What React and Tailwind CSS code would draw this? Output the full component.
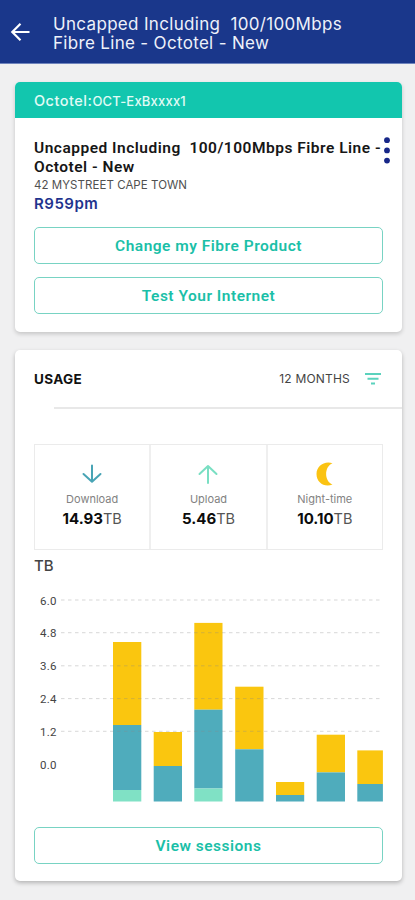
import React from "react";

const stats = [
  { label: "Download", value: "14.93", icon: "down" },
  { label: "Upload", value: "5.46", icon: "up" },
  { label: "Night-time", value: "10.10", icon: "moon" },
];

const gridLines = [
  { y: 10, label: "6.0" },
  { y: 42.7, label: "4.8" },
  { y: 75.8, label: "3.6" },
  { y: 108.6, label: "2.4" },
  { y: 141.3, label: "1.2" },
];

// top = night-time, mid = download, low = upload
const bars = [
  { x: 79, w: 28.3, top: 52, mid: 135, low: 200 },
  { x: 119.7, w: 28.3, top: 142, mid: 176 },
  { x: 160.3, w: 28.2, top: 32.9, mid: 119.7, low: 198.5 },
  { x: 201.2, w: 28.3, top: 96.7, mid: 159.3 },
  { x: 242, w: 28.2, top: 192, mid: 205 },
  { x: 282.7, w: 28.3, top: 144.7, mid: 182.4 },
  { x: 323.3, w: 25.6, top: 160.4, mid: 194 },
];

const BASE = 211.5;

const StatIcon = ({ name }) => {
  if (name === "moon") {
    return (
      <svg width="26" height="26" viewBox="0 0 26 26">
        <path d="M20.500 2.200C12 -.4 4.500 5.300 4.500 12.900C4.500 21.400 12.500 26.800 20.500 23.500C12 20 12 5.800 20.500 2.200Z" fill="#fbc312" />
      </svg>
    );
  }
  return (
    <svg width="26" height="26" viewBox="0 0 26 26" fill="none" strokeWidth="2" strokeLinecap="round" strokeLinejoin="round">
      {name === "down" ? (
        <path d="M13 4.500V20.500M4.500 13L13 20.800L21.500 13" stroke="#48a4b5" />
      ) : (
        <path d="M13 22V5.500M4.500 13L13 5L21.500 13" stroke="#7adfc3" />
      )}
    </svg>
  );
};

const OutlineButton = ({ children, className = "" }) => (
  <button className={`flex h-[37px] w-full items-center justify-center rounded-[5px] border-[1.5px] border-[#78d3c3] pt-[2px] font-[Roboto,sans-serif] text-[15.500px] font-semibold tracking-[0.5px] text-[#1bbfa8] ${className}`}>
    {children}
  </button>
);

const UsageChart = () => (
  <svg width="349" height="215" viewBox="0 0 349 215" className="block" fontFamily="Roboto, sans-serif">
    {bars.map((b) => (
      <g key={b.x}>
        <rect x={b.x} y={b.top} width={b.w} height={b.mid - b.top} fill="#fac60f" />
        <rect x={b.x} y={b.mid} width={b.w} height={(b.low || BASE) - b.mid} fill="#4facbc" />
        {b.low && <rect x={b.x} y={b.low} width={b.w} height={BASE - b.low} fill="#80e1c5" />}
      </g>
    ))}
    {gridLines.map((g) => (
      <g key={g.label}>
        <line x1="27" x2="349" y1={g.y} y2={g.y} stroke="#8a8a8a" strokeOpacity="0.33" strokeWidth="1" strokeDasharray="3.500 3.500" />
        <text x="6" y={g.y + 4.500} fontSize="11.500" letterSpacing="0.3" fill="#444">{g.label}</text>
      </g>
    ))}
    <text x="6" y="178.500" fontSize="11.500" letterSpacing="0.3" fill="#444">0.0</text>
  </svg>
);

const App = () => {
  return (
    <div className="h-[900px] w-full overflow-hidden bg-[#f0f0f1] font-[Inter,sans-serif]">
      <header className="flex h-16 items-start border-b border-[#6f84bd] bg-[#1a378b] text-[#eef1fa]">
        <svg width="20" height="20" viewBox="0 0 20 20" className="ml-[10px] mt-[22px]" fill="none" stroke="#fff" strokeWidth="2.200">
          <path d="M19.500 10H3M10.500 1.800L2.300 10L10.500 18.200" />
        </svg>
        <h1 className="ml-[23px] mt-[15px] whitespace-pre text-[17px] leading-[18.500px] tracking-[0.32px]">
          {"Uncapped Including  100/100Mbps\nFibre Line - Octotel - New"}
        </h1>
      </header>

      <main className="flex flex-col gap-[18px] pt-[18px] pr-[13px] pl-[15px]">
        <section className="h-[250px] rounded-[5px] bg-white shadow-[0_2px_4px_rgba(0,0,0,0.18)]">
          <div className="flex h-9 items-center rounded-t-[5px] bg-[#12c6ae] pt-[2px] pl-[19px] text-[#e2fbf6]">
            <span className="text-[14.500px] font-medium tracking-[0.5px]">Octotel:</span>
            <span className="pt-[2px] text-[13px] font-medium tracking-[0.2px]">OCT-ExBxxxx1</span>
          </div>
          <div className="px-[19px] pt-[21px]">
            <div className="flex h-[39px] items-start">
              <h2 className="w-[349px] shrink-0 whitespace-pre font-[Roboto,sans-serif] text-[15.500px] leading-[19px] font-semibold tracking-[0.5px] text-[#161616]">
                {"Uncapped Including  100/100Mbps Fibre Line -\nOctotel - New"}
              </h2>
              <svg width="8" height="30" viewBox="0 0 8 30" className="-mt-[3px] shrink-0" fill="#172788">
                <circle cx="4" cy="4.200" r="2.900" />
                <circle cx="4" cy="14.400" r="2.900" />
                <circle cx="4" cy="24.600" r="2.900" />
              </svg>
            </div>
            <p className="text-[11.500px] leading-[15px] tracking-[0.05px] text-[#505050]">42 MYSTREET CAPE TOWN</p>
            <p className="text-[15px] leading-[22px] font-semibold tracking-[0.5px] text-[#1f348e]">R959pm</p>
            <OutlineButton className="mt-[12px]">Change my Fibre Product</OutlineButton>
            <OutlineButton className="mt-[13px]">Test Your Internet</OutlineButton>
          </div>
        </section>

        <section className="h-[531px] rounded-[5px] bg-white shadow-[0_2px_4px_rgba(0,0,0,0.25)]">
          <div className="flex h-[57px] items-center px-[19px]">
            <h3 className="pt-px text-[13.500px] font-bold tracking-[0.35px] text-[#111]">USAGE</h3>
            <span className="ml-auto text-[12px] tracking-[0.2px] text-[#444]">12 MONTHS</span>
            <svg width="18" height="14" viewBox="0 0 18 14" className="ml-[14px] mr-px" fill="none" stroke="#5bd2bd" strokeWidth="1.900">
              <path d="M1 2H17M3.500 6.800H14.500M7 11.500H11" />
            </svg>
          </div>
          <div className="ml-[39px] h-[2px] bg-[#e8e8e8]" />

          <div className="px-[19px] pt-[35px]">
            <div className="flex h-[106px] border border-[#ebebeb]">
              {stats.map((s) => (
                <div key={s.label} className="flex flex-1 flex-col items-center border-l-2 border-[#efefef] pt-[16px] first:border-l-0">
                  <StatIcon name={s.icon} />
                  <span className="mt-[4px] text-[11px] leading-[16px] text-[#828282]">{s.label}</span>
                  <span className="text-[15px] leading-[24px] text-[#555]">
                    <b className="font-bold text-[#0c0c0c]">{s.value}</b>
                    <span className="text-[14.500px]">TB</span>
                  </span>
                </div>
              ))}
            </div>
            <p className="h-[40px] pt-[5px] text-[15px] leading-[22px] font-medium text-[#444]">TB</p>
            <UsageChart />
            <OutlineButton className="mt-[22px]">View sessions</OutlineButton>
          </div>
        </section>
      </main>
    </div>
  );
};

export default App;
